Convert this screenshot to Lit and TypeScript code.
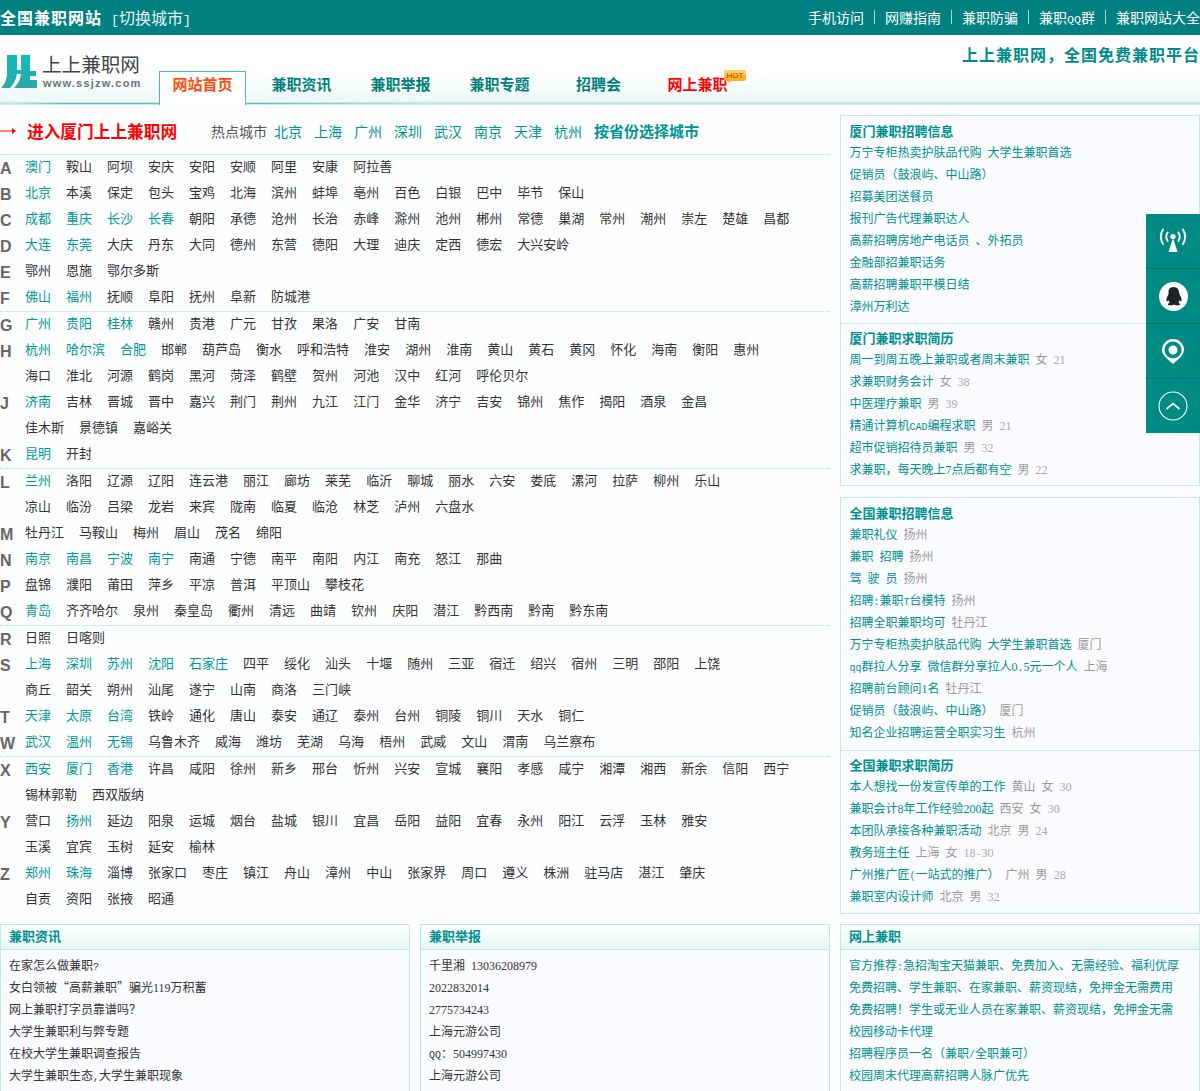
import { LitElement, html, css } from "lit";
import { customElement } from "lit/decorators.js";

// A city name followed by * is a highlighted (hot) city.
const cityGroups: [string, string][][] = [
  [
    ["A", "澳门* 鞍山 阿坝 安庆 安阳 安顺 阿里 安康 阿拉善"],
    ["B", "北京* 本溪 保定 包头 宝鸡 北海 滨州 蚌埠 亳州 百色 白银 巴中 毕节 保山"],
    ["C", "成都* 重庆* 长沙* 长春* 朝阳 承德 沧州 长治 赤峰 滁州 池州 郴州 常德 巢湖 常州 潮州 崇左 楚雄 昌都"],
    ["D", "大连* 东莞* 大庆 丹东 大同 德州 东营 德阳 大理 迪庆 定西 德宏 大兴安岭"],
    ["E", "鄂州 恩施 鄂尔多斯"],
    ["F", "佛山* 福州* 抚顺 阜阳 抚州 阜新 防城港"],
  ],
  [
    ["G", "广州* 贵阳* 桂林* 赣州 贵港 广元 甘孜 果洛 广安 甘南"],
    ["H", "杭州* 哈尔滨* 合肥* 邯郸 葫芦岛 衡水 呼和浩特 淮安 湖州 淮南 黄山 黄石 黄冈 怀化 海南 衡阳 惠州"],
    ["", "海口 淮北 河源 鹤岗 黑河 菏泽 鹤壁 贺州 河池 汉中 红河 呼伦贝尔"],
    ["J", "济南* 吉林 晋城 晋中 嘉兴 荆门 荆州 九江 江门 金华 济宁 吉安 锦州 焦作 揭阳 酒泉 金昌"],
    ["", "佳木斯 景德镇 嘉峪关"],
    ["K", "昆明* 开封"],
  ],
  [
    ["L", "兰州* 洛阳 辽源 辽阳 连云港 丽江 廊坊 莱芜 临沂 聊城 丽水 六安 娄底 漯河 拉萨 柳州 乐山"],
    ["", "凉山 临汾 吕梁 龙岩 来宾 陇南 临夏 临沧 林芝 泸州 六盘水"],
    ["M", "牡丹江 马鞍山 梅州 眉山 茂名 绵阳"],
    ["N", "南京* 南昌* 宁波* 南宁* 南通 宁德 南平 南阳 内江 南充 怒江 那曲"],
    ["P", "盘锦 濮阳 莆田 萍乡 平凉 普洱 平顶山 攀枝花"],
    ["Q", "青岛* 齐齐哈尔 泉州 秦皇岛 衢州 清远 曲靖 钦州 庆阳 潜江 黔西南 黔南 黔东南"],
  ],
  [
    ["R", "日照 日喀则"],
    ["S", "上海* 深圳* 苏州* 沈阳* 石家庄* 四平 绥化 汕头 十堰 随州 三亚 宿迁 绍兴 宿州 三明 邵阳 上饶"],
    ["", "商丘 韶关 朔州 汕尾 遂宁 山南 商洛 三门峡"],
    ["T", "天津* 太原* 台湾* 铁岭 通化 唐山 泰安 通辽 泰州 台州 铜陵 铜川 天水 铜仁"],
    ["W", "武汉* 温州* 无锡* 乌鲁木齐 威海 潍坊 芜湖 乌海 梧州 武威 文山 渭南 乌兰察布"],
  ],
  [
    ["X", "西安* 厦门* 香港* 许昌 咸阳 徐州 新乡 邢台 忻州 兴安 宣城 襄阳 孝感 咸宁 湘潭 湘西 新余 信阳 西宁"],
    ["", "锡林郭勒 西双版纳"],
    ["Y", "营口 扬州* 延边 阳泉 运城 烟台 盐城 银川 宜昌 岳阳 益阳 宜春 永州 阳江 云浮 玉林 雅安"],
    ["", "玉溪 宜宾 玉树 延安 榆林"],
    ["Z", "郑州* 珠海* 淄博 张家口 枣庄 镇江 舟山 漳州 中山 张家界 周口 遵义 株洲 驻马店 湛江 肇庆"],
    ["", "自贡 资阳 张掖 昭通"],
  ],
];

type Row = [string, string?, string?];
type Section = { title: string; rows: Row[] };

const box1: Section[] = [
  {
    title: "厦门兼职招聘信息",
    rows: [
      ["万宁专柜热卖护肤品代购 大学生兼职首选"],
      ["促销员（鼓浪屿、中山路）"],
      ["招募美团送餐员"],
      ["报刊广告代理兼职达人"],
      ["高薪招聘房地产电话员 、外拓员"],
      ["金融部招兼职话务"],
      ["高薪招聘兼职平模日结"],
      ["漳州万利达"],
    ],
  },
  {
    title: "厦门兼职求职简历",
    rows: [
      ["周一到周五晚上兼职或者周末兼职", "女", "21"],
      ["求兼职财务会计", "女", "38"],
      ["中医理疗兼职", "男", "39"],
      ["精通计算机CAD编程求职", "男", "21"],
      ["超市促销招待员兼职", "男", "32"],
      ["求兼职，每天晚上7点后都有空", "男", "22"],
    ],
  },
];

const box2: Section[] = [
  {
    title: "全国兼职招聘信息",
    rows: [
      ["兼职礼仪", "扬州"],
      ["兼职 招聘", "扬州"],
      ["驾 驶 员", "扬州"],
      ["招聘:兼职T台模特", "扬州"],
      ["招聘全职兼职均可", "牡丹江"],
      ["万宁专柜热卖护肤品代购 大学生兼职首选", "厦门"],
      ["qq群拉人分享 微信群分享拉人0.5元一个人", "上海"],
      ["招聘前台顾问1名", "牡丹江"],
      ["促销员（鼓浪屿、中山路）", "厦门"],
      ["知名企业招聘运营全职实习生", "杭州"],
    ],
  },
  {
    title: "全国兼职求职简历",
    rows: [
      ["本人想找一份发宣传单的工作", "黄山 女", "30"],
      ["兼职会计8年工作经验200起", "西安 女", "30"],
      ["本团队承接各种兼职活动", "北京 男", "24"],
      ["教务班主任", "上海 女", "18-30"],
      ["广州推广匠(一站式的推广）", "广州 男", "28"],
      ["兼职室内设计师", "北京 男", "32"],
    ],
  },
];

const panels: { title: string; link: boolean; rows: string[] }[] = [
  {
    title: "兼职资讯",
    link: false,
    rows: [
      "在家怎么做兼职?",
      "女白领被“高薪兼职”骗光119万积蓄",
      "网上兼职打字员靠谱吗？",
      "大学生兼职利与弊专题",
      "在校大学生兼职调查报告",
      "大学生兼职生态,大学生兼职现象",
    ],
  },
  {
    title: "兼职举报",
    link: false,
    rows: ["千里湘 13036208979", "2022832014", "2775734243", "上海元游公司", "QQ：504997430", "上海元游公司"],
  },
  {
    title: "网上兼职",
    link: true,
    rows: [
      "官方推荐:急招淘宝天猫兼职、免费加入、无需经验、福利优厚",
      "免费招聘、学生兼职、在家兼职、薪资现结，免押金无需费用",
      "免费招聘！学生或无业人员在家兼职、薪资现结，免押金无需",
      "校园移动卡代理",
      "招聘程序员一名（兼职/全职兼可）",
      "校园周末代理高薪招聘人脉广优先",
    ],
  },
];

// Splits text so digits and latin get the half-width metrics of the original bitmap font.
function t(text: string) {
  return text.split(/([0-9]+|[\x20-\x2f\x3a-\x7e]+)/).map((part, i) => {
    if (!part) return "";
    if (i % 2 === 0) return part;
    if (/^[0-9]+$/.test(part)) return html`<span class="d">${part}</span>`;
    return html`<span class="m">${part}</span>`;
  });
}

const textStyles = css`
  .d {
    font-family: "Liberation Serif", serif;
    font-size: 1em;
  }
  .m {
    font-family: "Liberation Mono", monospace;
    font-size: 0.834em;
  }
`;

@customElement("app-root")
export class AppRoot extends LitElement {
  static styles = [
    textStyles,
    css`
      :host {
        display: block;
        width: 1200px;
        background: #fdfeff;
        font-family: "Noto Sans CJK SC", "Liberation Sans", sans-serif;
        font-size: 12px;
        color: #333;
      }
      .top {
        height: 35px;
        box-sizing: border-box;
        padding-bottom: 2px;
        background: #008080;
        color: #fff;
        display: flex;
        align-items: center;
        justify-content: space-between;
      }
      .top-left {
        display: flex;
        align-items: center;
      }
      .site {
        font-size: 16px;
        font-weight: 700;
        letter-spacing: 1px;
      }
      .switch {
        font-size: 16px;
        margin-left: 9px;
        color: #e8f5f5;
        white-space: pre;
      }
      .top-nav {
        display: flex;
        align-items: center;
        font-size: 14px;
      }
      .top-nav i {
        width: 1px;
        height: 14px;
        background: #a8d8d8;
        margin: 0 10px;
      }
      .head {
        position: relative;
        height: 67px;
        display: flex;
        background: linear-gradient(#fff 0, #fff 58%, #ebf8f7 100%);
        border-bottom: 3px solid #c0eae8;
      }
      .head::after {
        content: "";
        position: absolute;
        left: 0;
        right: 0;
        bottom: -2px;
        height: 1px;
        background: linear-gradient(90deg, transparent 1%, #62c2be 5%, #62c2be 22%, transparent 36%);
      }
      .logo {
        width: 153px;
        height: 40px;
        margin-top: 17px;
        display: flex;
      }
      .logo svg {
        width: 39px;
        height: 38px;
        flex: none;
      }
      .logo-text {
        margin-left: 3px;
        display: flex;
        flex-direction: column;
      }
      .logo-cn {
        font-size: 19.6px;
        line-height: 24px;
        color: #3f4444;
        white-space: nowrap;
      }
      .logo-en {
        font-family: "Liberation Sans", sans-serif;
        font-size: 11px;
        font-weight: 700;
        letter-spacing: 1.2px;
        line-height: 15px;
        margin-left: 1px;
        color: #6c7274;
        white-space: nowrap;
      }
      .head-right {
        flex: 1;
        display: flex;
        flex-direction: column;
        justify-content: space-between;
      }
      .slogan {
        text-align: right;
        font-size: 16px;
        font-weight: 700;
        letter-spacing: 1px;
        line-height: 20px;
        color: #008b8b;
        padding-top: 9px;
      }
      .tabs {
        display: flex;
        gap: 12px;
        margin-left: 6px;
      }
      .tab {
        position: relative;
        z-index: 1;
        box-sizing: border-box;
        width: 87px;
        height: 34px;
        margin-bottom: -3px;
        margin-top: -3px;
        border: 1px solid transparent;
        border-bottom: 0;
        text-align: center;
        font-size: 15px;
        font-weight: 700;
        line-height: 23px;
        color: #007f7a;
        white-space: nowrap;
      }
      .tab.on {
        background: #fff;
        border-color: #4db8b4;
        color: #ff4d0d;
      }
      .tab.red {
        color: #f00;
      }
      .hot {
        position: absolute;
        left: 69px;
        top: -2px;
        width: 22px;
        height: 13px;
      }
      .hot svg {
        display: block;
      }
      .hot span {
        position: absolute;
        left: 0;
        right: 0;
        top: 1px;
        font-family: "Liberation Sans", sans-serif;
        font-size: 8px;
        line-height: 9px;
        font-weight: 400;
        color: #d42a00;
        text-align: center;
      }
      .main {
        display: flex;
        gap: 10px;
        padding-top: 10px;
      }
      .left {
        width: 830px;
        flex: none;
      }
      .right {
        width: 360px;
        flex: none;
        display: flex;
        flex-direction: column;
        gap: 11px;
      }
      .enter-row {
        height: 40px;
        box-sizing: border-box;
        border-bottom: 1px dotted #a8dcdc;
        display: flex;
        align-items: center;
        font-size: 14px;
        white-space: nowrap;
        padding-bottom: 8px;
      }
      .enter-row svg {
        width: 16px;
        height: 8px;
        flex: none;
        margin-right: 11px;
      }
      .enter-text {
        font-size: 16.7px;
        font-weight: 700;
        color: #f00;
        width: 184px;
      }
      .hot-label {
        color: #555;
        margin-right: 7px;
      }
      .hot-city {
        color: #009393;
        margin-right: 12px;
      }
      .by-prov {
        color: #009393;
        font-weight: 700;
        font-size: 15px;
      }
      .group {
        border-bottom: 1px dotted #a8dcdc;
      }
      .group:last-child {
        border-bottom: 0;
      }
      .line {
        height: 26px;
        display: flex;
        align-items: center;
        font-size: 13px;
        white-space: nowrap;
      }
      .letter {
        width: 25px;
        flex: none;
        padding-top: 1px;
        font-family: "Liberation Sans", sans-serif;
        font-size: 16px;
        font-weight: 700;
        color: #666;
      }
      .city {
        margin-right: 15px;
        padding-bottom: 5px;
        color: #333;
      }
      .city.h {
        color: #009999;
      }
      .box {
        border: 1px solid #c0eae8;
        background: #fbfcff;
      }
      .sec {
        padding: 4px 8.5px 6px;
      }
      .sec + .sec {
        border-top: 1px dotted #a8dcdc;
        padding-top: 3px;
        padding-bottom: 5px;
      }
      .box.wide .sec {
        padding-bottom: 7px;
      }
      .box.wide .sec + .sec {
        padding-bottom: 6px;
      }
      .sec-title {
        height: 21px;
        line-height: 21px;
        font-size: 13px;
        font-weight: 700;
        color: #009090;
      }
      .row {
        height: 22px;
        line-height: 22px;
        white-space: pre;
        color: #009090;
      }
      .row .meta {
        color: #999;
      }
      .row .age {
        color: #aaa;
      }
      .panels {
        display: grid;
        grid-template-columns: 410px 410px 360px;
        gap: 10px;
        margin-top: 10px;
      }
      .panel {
        box-sizing: border-box;
        height: 180px;
        border: 1px solid #c0eae8;
        background: #fbfcff;
      }
      .panel-head {
        height: 25px;
        box-sizing: border-box;
        border-bottom: 1px solid #c0eae8;
        background: linear-gradient(#fff, #e6f7f5);
        padding-left: 8px;
        line-height: 21px;
        font-size: 13px;
        font-weight: 700;
        color: #009090;
      }
      .panel-body {
        padding: 4px 8px;
      }
      .panel-row {
        height: 22px;
        line-height: 22px;
        white-space: pre;
        color: #333;
      }
      .panel.link .panel-row {
        color: #009090;
      }
      .side {
        position: fixed;
        right: 0;
        top: 214px;
        width: 54px;
        background: #008a84;
      }
      .side-cell {
        height: 55px;
        box-sizing: border-box;
        display: flex;
        align-items: center;
        justify-content: center;
        border-bottom: 1px solid #0a726d;
      }
      .side-cell:last-child {
        border-bottom: 0;
        height: 54px;
      }
    `,
  ];

  private renderSection(s: Section) {
    return html`<div class="sec">
      <div class="sec-title">${s.title}</div>
      ${s.rows.map(
        ([a, b, c]) => html`<div class="row">${t(a)}${b
          ? html`<span class="meta">${t(" " + b)}</span>`
          : ""}${c ? html`<span class="age">${t(" " + c)}</span>` : ""}</div>`
      )}
    </div>`;
  }

  render() {
    return html`
      <div class="top">
        <div class="top-left">
          <span class="site">全国兼职网站</span>
          <span class="switch">${t("[切换城市]")}</span>
        </div>
        <nav class="top-nav">
          <span>手机访问</span><i></i><span>网赚指南</span><i></i><span>兼职防骗</span><i></i
          ><span>${t("兼职QQ群")}</span><i></i><span>兼职网站大全</span>
        </nav>
      </div>

      <header class="head">
        <div class="logo">
          <svg viewBox="0 0 39 38">
            <defs>
              <linearGradient id="lg" x1="0" y1="0" x2="0" y2="1">
                <stop offset="0" stop-color="#12bcbc" />
                <stop offset="1" stop-color="#2aa7a7" />
              </linearGradient>
            </defs>
            <path
              fill="url(#lg)"
              d="M7 3h10v17c0 7-4 13-7 16H1c4-4 6-9 6-16zM17 18h4v4h-4zM21 3h9v16h6v5h-6v4h7v8H14c3-3 7-8 7-16z"
            />
          </svg>
          <div class="logo-text">
            <span class="logo-cn">上上兼职网</span>
            <span class="logo-en">www.ssjzw.com</span>
          </div>
        </div>
        <div class="head-right">
          <div class="slogan">上上兼职网，全国免费兼职平台</div>
          <div class="tabs">
            <div class="tab on">网站首页</div>
            <div class="tab">兼职资讯</div>
            <div class="tab">兼职举报</div>
            <div class="tab">兼职专题</div>
            <div class="tab">招聘会</div>
            <div class="tab red">
              网上兼职
              <span class="hot">
                <svg width="22" height="13" viewBox="0 0 22 13">
                  <path d="M2 0h18a2 2 0 0 1 2 2v7a2 2 0 0 1-2 2H7l-2.5 2L4 11H2a2 2 0 0 1-2-2V2a2 2 0 0 1 2-2z" fill="#f5b32a" />
                  <path d="M2 0h18a2 2 0 0 1 2 2v3H0V2a2 2 0 0 1 2-2z" fill="#fbd35e" />
                </svg>
                <span>HOT</span>
              </span>
            </div>
          </div>
        </div>
      </header>

      <div class="main">
        <div class="left">
          <div class="enter-row">
            <svg viewBox="0 0 16 8"><path d="M0 3.500h12V1l4 3-4 3V4.500H0z" fill="#f00" /></svg>
            <span class="enter-text">进入厦门上上兼职网</span>
            <span class="hot-label">热点城市</span>
            ${["北京", "上海", "广州", "深圳", "武汉", "南京", "天津", "杭州"].map(
              (c) => html`<span class="hot-city">${c}</span>`
            )}
            <span class="by-prov">按省份选择城市</span>
          </div>
          ${cityGroups.map(
            (g) => html`<div class="group">
              ${g.map(
                ([l, list]) => html`<div class="line">
                  <span class="letter">${l}</span>
                  ${list.split(" ").map((c) => {
                    const hot = c.endsWith("*");
                    return html`<span class="city ${hot ? "h" : ""}">${hot ? c.slice(0, -1) : c}</span>`;
                  })}
                </div>`
              )}
            </div>`
          )}
        </div>
        <aside class="right">
          <div class="box">${box1.map((s) => this.renderSection(s))}</div>
          <div class="box wide">${box2.map((s) => this.renderSection(s))}</div>
        </aside>
      </div>

      <div class="panels">
        ${panels.map(
          (p) => html`<section class="panel ${p.link ? "link" : ""}">
            <div class="panel-head">${p.title}</div>
            <div class="panel-body">${p.rows.map((r) => html`<div class="panel-row">${t(r)}</div>`)}</div>
          </section>`
        )}
      </div>

      <div class="side">
        <div class="side-cell">
          <svg width="30" height="26" viewBox="0 0 30 26" fill="none" stroke="#fff" stroke-linecap="round">
            <circle cx="15" cy="8.5" r="2.6" fill="#fff" stroke="none" />
            <path d="M15 10l-4.5 14h9z" fill="#fff" stroke="none" />
            <path d="M9.6 4.5a8 8 0 0 0 0 8.5M20.4 4.5a8 8 0 0 1 0 8.5" stroke-width="1.9" />
            <path d="M5 1.5a14 14 0 0 0 0 14.5M25 1.5a14 14 0 0 1 0 14.5" stroke-width="1.9" />
          </svg>
        </div>
        <div class="side-cell">
          <svg width="29" height="29" viewBox="0 0 29 29">
            <circle cx="14.5" cy="14.5" r="14.5" fill="#fff" />
            <path
              d="M14.5 5c3.6 0 5.6 2.8 5.8 6.2.1 1.100.6 1.900 1.200 3 1 1.800 1.400 3.800.9 4.800-.4.700-1.200-.1-1.800-1.100-.2 1.200-.7 2.200-1.500 2.900 1.200.4 2.100 1 2 1.600-.1.700-1.700 1-3.400.9-1.200-.1-2.200-.5-2.700-.8-.5.300-1.500.7-2.700.8-1.700.1-3.300-.2-3.400-.9-.1-.6.800-1.200 2-1.600-.8-.7-1.300-1.700-1.500-2.900-.6 1-1.400 1.800-1.800 1.100-.5-1 0-3 .9-4.800.6-1.100 1.100-1.900 1.200-3C8.900 7.800 10.900 5 14.500 5z"
              fill="#1f2326"
            />
          </svg>
        </div>
        <div class="side-cell">
          <svg width="22" height="25" viewBox="0 0 22 25">
            <path
              fill="#fff"
              fill-rule="evenodd"
              d="M11 0a11 11 0 0 1 11 11c0 5-5 8.500-11 14C5 19.500 0 16 0 11A11 11 0 0 1 11 0zm0 2.500a8.500 8.500 0 0 0 0 17 8.500 8.500 0 0 0 0-17zM11 6.500a4.500 4.500 0 1 1 0 9 4.500 4.500 0 0 1 0-9z"
            />
          </svg>
        </div>
        <div class="side-cell">
          <svg width="30" height="30" viewBox="0 0 30 30" fill="none" stroke="#fff">
            <circle cx="15" cy="15" r="14" stroke-width="1.100" />
            <path d="M8.500 18l6.500-5.500 6.500 5.500" stroke-width="1.700" />
          </svg>
        </div>
      </div>
    `;
  }
}
